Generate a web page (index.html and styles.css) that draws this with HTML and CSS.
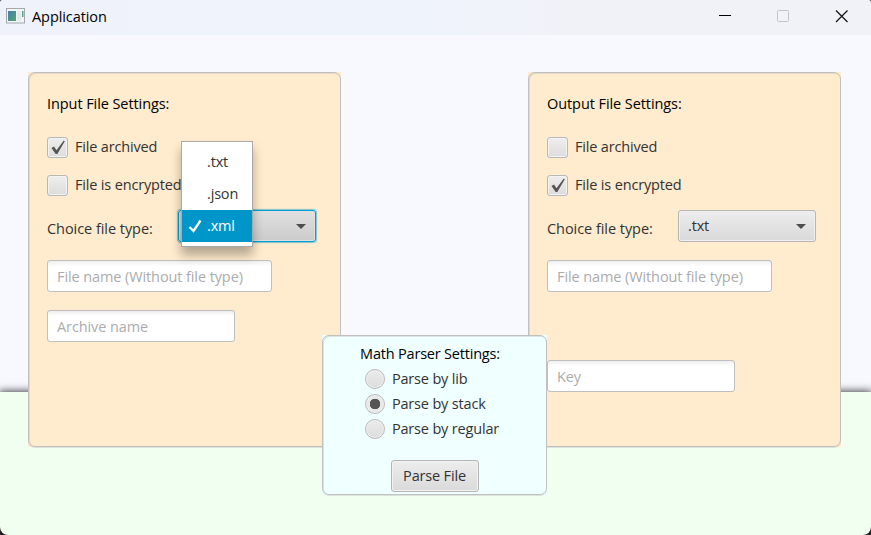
FILE: index.html
```html
<!DOCTYPE html>
<html lang="en">
<head>
<meta charset="utf-8">
<title>Application</title>
<link rel="stylesheet" href="styles.css">
</head>
<body>
<div class="window">
  <header class="titlebar">
    <svg class="app-icon" width="19" height="16" viewBox="0 0 19 16">
      <defs><linearGradient id="ig" x1="0" y1="0" x2="1" y2="1"><stop offset="0" stop-color="#4b7fa8"/><stop offset="1" stop-color="#4fa674"/></linearGradient></defs>
      <rect x=".5" y=".5" width="18" height="14.5" fill="#f4f6f6" stroke="#a3a8ac"/>
      <rect x="2" y="3" width="8" height="10" fill="url(#ig)"/>
      <rect x="11" y="3" width="4" height="10" fill="#e6ebea"/>
      <rect x="16" y="3" width="1.5" height="6" fill="#58a08c"/>
    </svg>
    <span class="title">Application</span>
    <svg class="controls" width="132" height="16" viewBox="0 0 132 16">
      <path d="M0 7.5h12" stroke="#000"/>
      <rect x="58.5" y="2.500" width="11" height="11" rx="1" fill="none" stroke="#c2c4c8"/>
      <path d="M117 2.500l11.500 11.500M128.500 2.500L117 14" stroke="#111" stroke-width="1.200"/>
    </svg>
  </header>
  <main class="stage">
    <div class="backdrop"><div class="sky"></div><div class="ground"></div></div>
    <section class="panel panel-in">
      <h2>Input File Settings:</h2>
      <label class="check"><span class="box"><svg width="21" height="21"><path d="M4.500 11L7 9.500L9.500 13.200L16.800 3.500L17.800 4.200L10.300 17H8.700Z" fill="#555"/></svg></span><span>File archived</span></label>
      <label class="check"><span class="box"></span><span>File is encrypted</span></label>
      <div class="choice">
        <span class="caption">Choice file type:</span>
        <div class="select focused"><span class="arrow"></span>
          <ul class="menu">
            <li>.txt</li>
            <li>.json</li>
            <li class="selected"><svg width="14" height="14"><path d="M1.500 8L5.500 12L12.500 1.500" fill="none" stroke="#fff" stroke-width="2.300"/></svg>.xml</li>
          </ul>
        </div>
      </div>
      <div class="field wide">File name (Without file type)</div>
      <div class="field">Archive name</div>
    </section>
    <section class="panel panel-out">
      <h2>Output File Settings:</h2>
      <label class="check"><span class="box"></span><span>File archived</span></label>
      <label class="check"><span class="box"><svg width="21" height="21"><path d="M4.500 11L7 9.500L9.500 13.200L16.800 3.500L17.800 4.200L10.300 17H8.700Z" fill="#555"/></svg></span><span>File is encrypted</span></label>
      <div class="choice">
        <span class="caption">Choice file type:</span>
        <div class="select"><span>.txt</span><span class="arrow"></span></div>
      </div>
      <div class="field wide">File name (Without file type)</div>
      <div class="field key">Key</div>
    </section>
    <section class="panel parser">
      <h2>Math Parser Settings:</h2>
      <div class="radios">
        <label><span class="radio"></span><span>Parse by lib</span></label>
        <label><span class="radio on"></span><span>Parse by stack</span></label>
        <label><span class="radio"></span><span>Parse by regular</span></label>
      </div>
      <div class="button">Parse File</div>
    </section>
  </main>
</div>
</body>
</html>
```
FILE: styles.css
```css
* { box-sizing: border-box; }
body {
  margin: 0;
  background: #202020;
  font: 14.500px/20px "Open Sans", "Noto Sans", sans-serif;
  letter-spacing: -0.170px;
  color: #333;
  white-space: nowrap;
}
.window {
  width: 871px;
  height: 535px;
  display: flex;
  flex-direction: column;
  overflow: hidden;
  border-radius: 2px 2px 8px 8px;
}
.titlebar {
  height: 35px;
  flex: none;
  display: flex;
  align-items: center;
  padding: 0 20px 3px 6px;
  background: linear-gradient(90deg, #eff2fa, #eff3fb 45%, #f0f2f7 70%);
}
.title { margin: 2px 0 0 7px; color: #000; letter-spacing: -0.080px; }
.controls { margin-left: auto; }
.stage {
  flex: 1;
  display: grid;
  grid-template-columns: 871px;
  grid-template-rows: 500px;
}
.stage > * { grid-area: 1 / 1; }
.sky { height: 357px; background: #f8f8ff; }
.ground {
  height: 143px;
  background: #f0fff0;
  box-shadow: 0 0 8px 1px rgba(0, 0, 0, .75);
}
.panel {
  position: relative;
  width: 313px;
  height: 375px;
  margin-top: 37px;
  padding: 22px 19px;
  background: #ffebcd;
}
.panel::before {
  content: "";
  position: absolute;
  inset: 0;
  border: 1px solid #c0c0c0;
  border-radius: 7px;
  box-shadow: inset 1px 1px 0 rgba(192, 192, 192, .45), 0 1px 0 rgba(192, 192, 192, .45);
  pointer-events: none;
}
.panel-in { margin-left: 28px; }
.panel-out { margin-left: 528px; }
h2 {
  margin: 0;
  font-size: inherit;
  font-weight: 400;
  letter-spacing: -0.080px;
  color: #000;
}
.check {
  display: flex;
  gap: 7px;
  height: 21px;
  margin-bottom: 17px;
}
h2 + .check { margin-top: 23px; }
.box {
  width: 21px;
  height: 21px;
  border: 1px solid #b8b8b8;
  border-radius: 3px;
  background: linear-gradient(#eee, #dcdcdc);
  box-shadow: inset 0 0 0 1px #f3f3f3;
}
.box svg { display: block; margin: -1px; }
.choice {
  display: flex;
  justify-content: space-between;
  align-items: center;
  width: 269px;
  height: 32px;
  margin-top: -3px;
}
.caption { padding-top: 6px; letter-spacing: -0.050px; }
.select {
  position: relative;
  display: flex;
  align-items: center;
  justify-content: space-between;
  width: 138px;
  height: 32px;
  padding: 0 9px;
  border: 1px solid #b5b5b5;
  border-radius: 3px;
  background: linear-gradient(#ededed, #d9d9d9);
  box-shadow: inset 0 0 0 1px #f0f0f0;
}
.focused {
  border-color: #039ed3;
  background: linear-gradient(#e0e0e0, #cbcbcb);
  box-shadow: 0 0 1px 1px rgba(3, 158, 211, .5), inset 0 0 0 1px #e0e0e0;
}
.arrow {
  margin-left: auto;
  border: 5px solid transparent;
  border-top-color: #4d4d4d;
  border-bottom: 0;
}
.menu {
  position: absolute;
  left: 2px;
  top: -70px;
  width: 72px;
  height: 106px;
  margin: 0;
  padding: 4px 0 0;
  list-style: none;
  background: #fff;
  border: 1px solid #a9a9a9;
  box-shadow: 0 8px 10px rgba(0, 0, 0, .3);
}
.menu li {
  height: 32px;
  line-height: 32px;
  padding-left: 25px;
}
.menu .selected {
  display: flex;
  align-items: center;
  padding-left: 6px;
  gap: 5px;
  background: #0096c9;
  color: #fff;
}
.field {
  width: 188px;
  height: 32px;
  margin-top: 18px;
  padding-left: 9px;
  line-height: 31px;
  letter-spacing: -0.100px;
  border: 1px solid #bfbfbf;
  border-radius: 3px;
  background: linear-gradient(#eee, #fff 5px);
  color: #acacac;
}
.wide { width: 225px; }
.key { margin-top: 68px; }
.parser {
  display: flex;
  flex-direction: column;
  align-items: center;
  width: 225px;
  height: 160px;
  margin: 300px 0 0 322px;
  padding: 9px 0 0;
  background: #f0ffff;
}
.parser h2 { margin-right: 9px; letter-spacing: -0.200px; }
.radios { margin: 2px 5px 0 0; }
.radios label { display: flex; align-items: center; height: 25px; gap: 7px; }
.radio {
  width: 20px;
  height: 20px;
  border: 1px solid #b9b9b9;
  border-radius: 50%;
  background: linear-gradient(#ececec, #dcdcdc);
  box-shadow: inset 0 0 0 1px #f2f2f2;
}
.on { background: radial-gradient(circle, #555 5px, #e8e8e8 5.500px); }
.button {
  width: 88px;
  height: 32px;
  margin-top: 19px;
  line-height: 30px;
  text-align: center;
  border: 1px solid #b5b5b5;
  border-radius: 3px;
  background: linear-gradient(#ededed, #dadada);
  box-shadow: inset 0 0 0 1px #f2f2f2;
}
```
